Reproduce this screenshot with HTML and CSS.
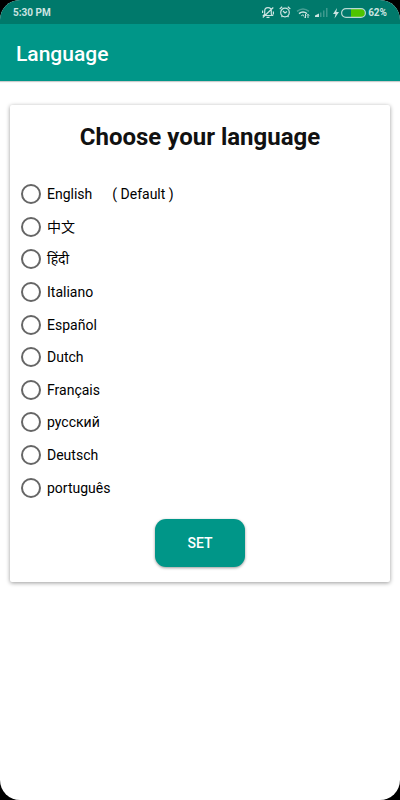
FILE: index.html
```html
<!DOCTYPE html>
<html lang="en">
<head>
<meta charset="utf-8">
<meta name="viewport" content="width=device-width, initial-scale=1">
<title>Language</title>
<link rel="stylesheet" href="styles.css">
</head>
<body>
<div class="screen">
  <div class="status">
    <span>5:30 PM</span>
    <div class="status-icons">
      <svg class="icon" width="12" height="14" viewBox="0 0 12 14" fill="none" stroke="currentColor" stroke-width="1.200">
        <path d="M1.500 9.500h9L9.300 8V5a3.300 3.300 0 0 0-6.600 0v3zM4.500 11.300h3M.8 11.500 11.300 1.500M.6 7V4.500M11.400 5.500v3"/>
      </svg>
      <svg class="icon" width="12" height="14" viewBox="0 0 12 14" fill="none" stroke="currentColor" stroke-width="1.200">
        <circle cx="6" cy="6.500" r="4.300"/><path d="M4 5l2 2 2-1.500M.7 3 3.200 .8M11.300 3 8.800 .8M2.500 11l1-1.200M9.500 11l-1-1.200"/>
      </svg>
      <svg class="icon" width="14" height="14" viewBox="0 0 14 14" fill="none" stroke="currentColor" stroke-width="1.500">
        <path opacity=".35" d="M1 5.300Q7 .5 13 5.300"/><path d="M3 7.700Q7 4.500 11 7.700"/><path d="M5.300 9.700Q7 8.300 8 9.500M9.500 8v4M8 10.500l1.500 1.500M12 12V8.500M10.800 9.500 12 8.300l1.200 1.200" stroke-width="1"/>
      </svg>
      <svg class="icon" width="13" height="14" viewBox="0 0 13 14" fill="currentColor">
        <path d="M0 11V9.500L4 7.500V11z"/><path opacity=".3" d="M5 6.500h1.500V11H5zM8 4.500h1.500V11H8zM11 2h1.500v9H11z"/>
      </svg>
      <svg class="icon" width="6" height="14" viewBox="0 0 6 14" fill="currentColor"><path d="M4 2 0 8h2.500L1.500 12.500 6 6H3.300z"/></svg>
      <svg class="battery" width="25" height="10" viewBox="0 0 25 10">
        <path d="M10 1h10.500a3.500 3.500 0 0 1 3.500 4 3.500 3.500 0 0 1-3.500 4H10z" fill="#4fc400"/>
        <rect x=".6" y=".6" width="23.800" height="8.800" rx="4.400" fill="none" stroke="#b6d9d3" stroke-width="1.200"/>
      </svg>
      <span>62%</span>
    </div>
  </div>
  <header class="appbar"><h1>Language</h1></header>
  <main>
    <form class="card">
      <h2>Choose your language</h2>
      <div class="options">
        <label><input type="radio" name="lang"><span>English<span class="note">( Default )</span></span></label>
        <label><input type="radio" name="lang"><span lang="zh">中文</span></label>
        <label><input type="radio" name="lang"><span lang="hi">हिंदी</span></label>
        <label><input type="radio" name="lang"><span>Italiano</span></label>
        <label><input type="radio" name="lang"><span>Español</span></label>
        <label><input type="radio" name="lang"><span>Dutch</span></label>
        <label><input type="radio" name="lang"><span>Français</span></label>
        <label><input type="radio" name="lang"><span>русский</span></label>
        <label><input type="radio" name="lang"><span>Deutsch</span></label>
        <label><input type="radio" name="lang"><span>português</span></label>
      </div>
      <button type="button">SET</button>
    </form>
  </main>
</div>
</body>
</html>
```
FILE: styles.css
```css
* { box-sizing: border-box; }
body {
  margin: 0;
  background: #000;
  font-family: Roboto, "Noto Sans", "Noto Sans CJK SC", sans-serif;
}
h1, h2 { margin: 0; }
.screen {
  min-height: 100vh;
  background: #fff;
  border-radius: 20px;
  overflow: hidden;
}
.status {
  display: flex;
  align-items: center;
  justify-content: space-between;
  height: 24px;
  padding: 1px 13px 0;
  background: #00796b;
  color: #cce4e1;
  font-size: 10px;
  font-weight: 700;
}
.status-icons { display: flex; align-items: center; gap: 5px; }
.battery { margin: 0 -3px; }
.appbar {
  display: flex;
  align-items: center;
  height: 57px;
  padding: 3px 16px 0;
  background: #009688;
  color: #fff;
  box-shadow: 0 1px 1px #0003;
}
.appbar h1 { font-size: 21px; font-weight: 500; }
main { padding: 24px 10px; }
.card {
  display: flex;
  flex-direction: column;
  align-items: center;
  padding: 16px 11px 15px;
  border-radius: 2px;
  background: #fff;
  box-shadow: 0 1px 4px #0006;
}
.card h2 {
  color: #111;
  font-size: 24px;
  font-weight: 700;
  line-height: 32px;
}
.options {
  display: grid;
  grid-template-rows: repeat(10, 1fr);
  align-self: stretch;
  height: 326px;
  margin: 25px 0 15px;
}
.options label {
  display: flex;
  align-items: center;
  gap: 6px;
  min-height: 0;
  color: #000;
  font-size: 14px;
  line-height: 20px;
}
.options input {
  appearance: none;
  width: 20px;
  height: 20px;
  margin: 0;
  border: 2px solid #666;
  border-radius: 50%;
}
.options input:checked {
  border-color: #009688;
  background: radial-gradient(#009688 5px, transparent 6px);
}
.note { margin-left: 20px; }
button {
  width: 90px;
  height: 48px;
  border: 0;
  border-radius: 11px;
  background: #009688;
  box-shadow: 0 1px 3px #0006;
  color: #fff;
  font: 500 14px Roboto, sans-serif;
}
```
